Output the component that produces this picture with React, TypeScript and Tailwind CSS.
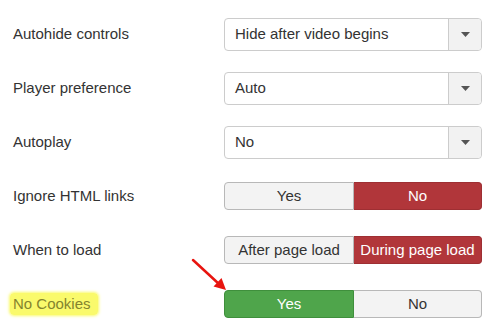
import React from "react";

function Select({ value }: { value: string }) {
  return (
    <div className="flex h-[33px] w-[258px] rounded-[4px] border border-[#cccccc] bg-white">
      <div className="flex flex-1 items-center pl-[10px] text-[15px] text-[#333333]">{value}</div>
      <div className="flex w-[33px] items-center justify-center rounded-r-[4px] border-l border-[#cccccc] bg-[#f2f2f2]">
        <svg width="9" height="5" viewBox="0 0 9 5">
          <polygon points="0,0 9,0 4.5,5" fill="#555555" />
        </svg>
      </div>
    </div>
  );
}

function Toggle({
  left,
  right,
  active,
  color,
}: {
  left: string;
  right: string;
  active: "left" | "right";
  color: "red" | "green";
}) {
  const activeCls =
    color === "red"
      ? "bg-[#b1363a] border-[#9e2f33] text-white"
      : "bg-[#4fa54b] border-[#3f8f3c] text-white";
  const idle = "bg-[#f3f3f3] border-[#b8b8b8] text-[#333333]";
  return (
    <div className="flex h-[28px] w-[258px] text-[15px]">
      <div
        className={`flex w-[130px] items-center justify-center rounded-l-[4px] border ${
          active === "left" ? activeCls : idle
        }`}
      >
        {left}
      </div>
      <div
        className={`flex flex-1 items-center justify-center rounded-r-[4px] border border-l-0 ${
          active === "right" ? activeCls : idle
        }`}
      >
        {right}
      </div>
    </div>
  );
}

function Row({ label, children, highlight }: { label: string; children: React.ReactNode; highlight?: boolean }) {
  return (
    <div className="flex h-[54px] items-center">
      <div className="w-[224px] pl-[13px] text-[15px] text-[#333333]">
        {highlight ? (
          <span className="-ml-[3px] rounded-[4px] bg-[#fafa6c] pb-[3px] pl-[3px] pr-[7px] pt-[2px] text-[#84842e] shadow-[0_0_3px_1px_#fafa6c]">
            {label}
          </span>
        ) : (
          label
        )}
      </div>
      {children}
    </div>
  );
}

export default function App() {
  return (
    <div
      className="relative h-[326px] w-[495px] overflow-hidden bg-white pt-[7px]"
      style={{ fontFamily: '"Liberation Sans", Arial, sans-serif' }}
    >
      <Row label="Autohide controls">
        <Select value="Hide after video begins" />
      </Row>
      <Row label="Player preference">
        <Select value="Auto" />
      </Row>
      <Row label="Autoplay">
        <Select value="No" />
      </Row>
      <Row label="Ignore HTML links">
        <Toggle left="Yes" right="No" active="right" color="red" />
      </Row>
      <Row label="When to load">
        <Toggle left="After page load" right="During page load" active="right" color="red" />
      </Row>
      <Row label="No Cookies" highlight>
        <Toggle left="Yes" right="No" active="left" color="green" />
      </Row>
      <svg className="absolute left-0 top-0" width="495" height="326" viewBox="0 0 495 326">
        <line x1="193" y1="260" x2="219" y2="284" stroke="#e8140f" strokeWidth="2.5" strokeLinecap="round" />
        <polygon points="226,290 213.5,286.5 221.5,278" fill="#e8140f" />
      </svg>
    </div>
  );
}
